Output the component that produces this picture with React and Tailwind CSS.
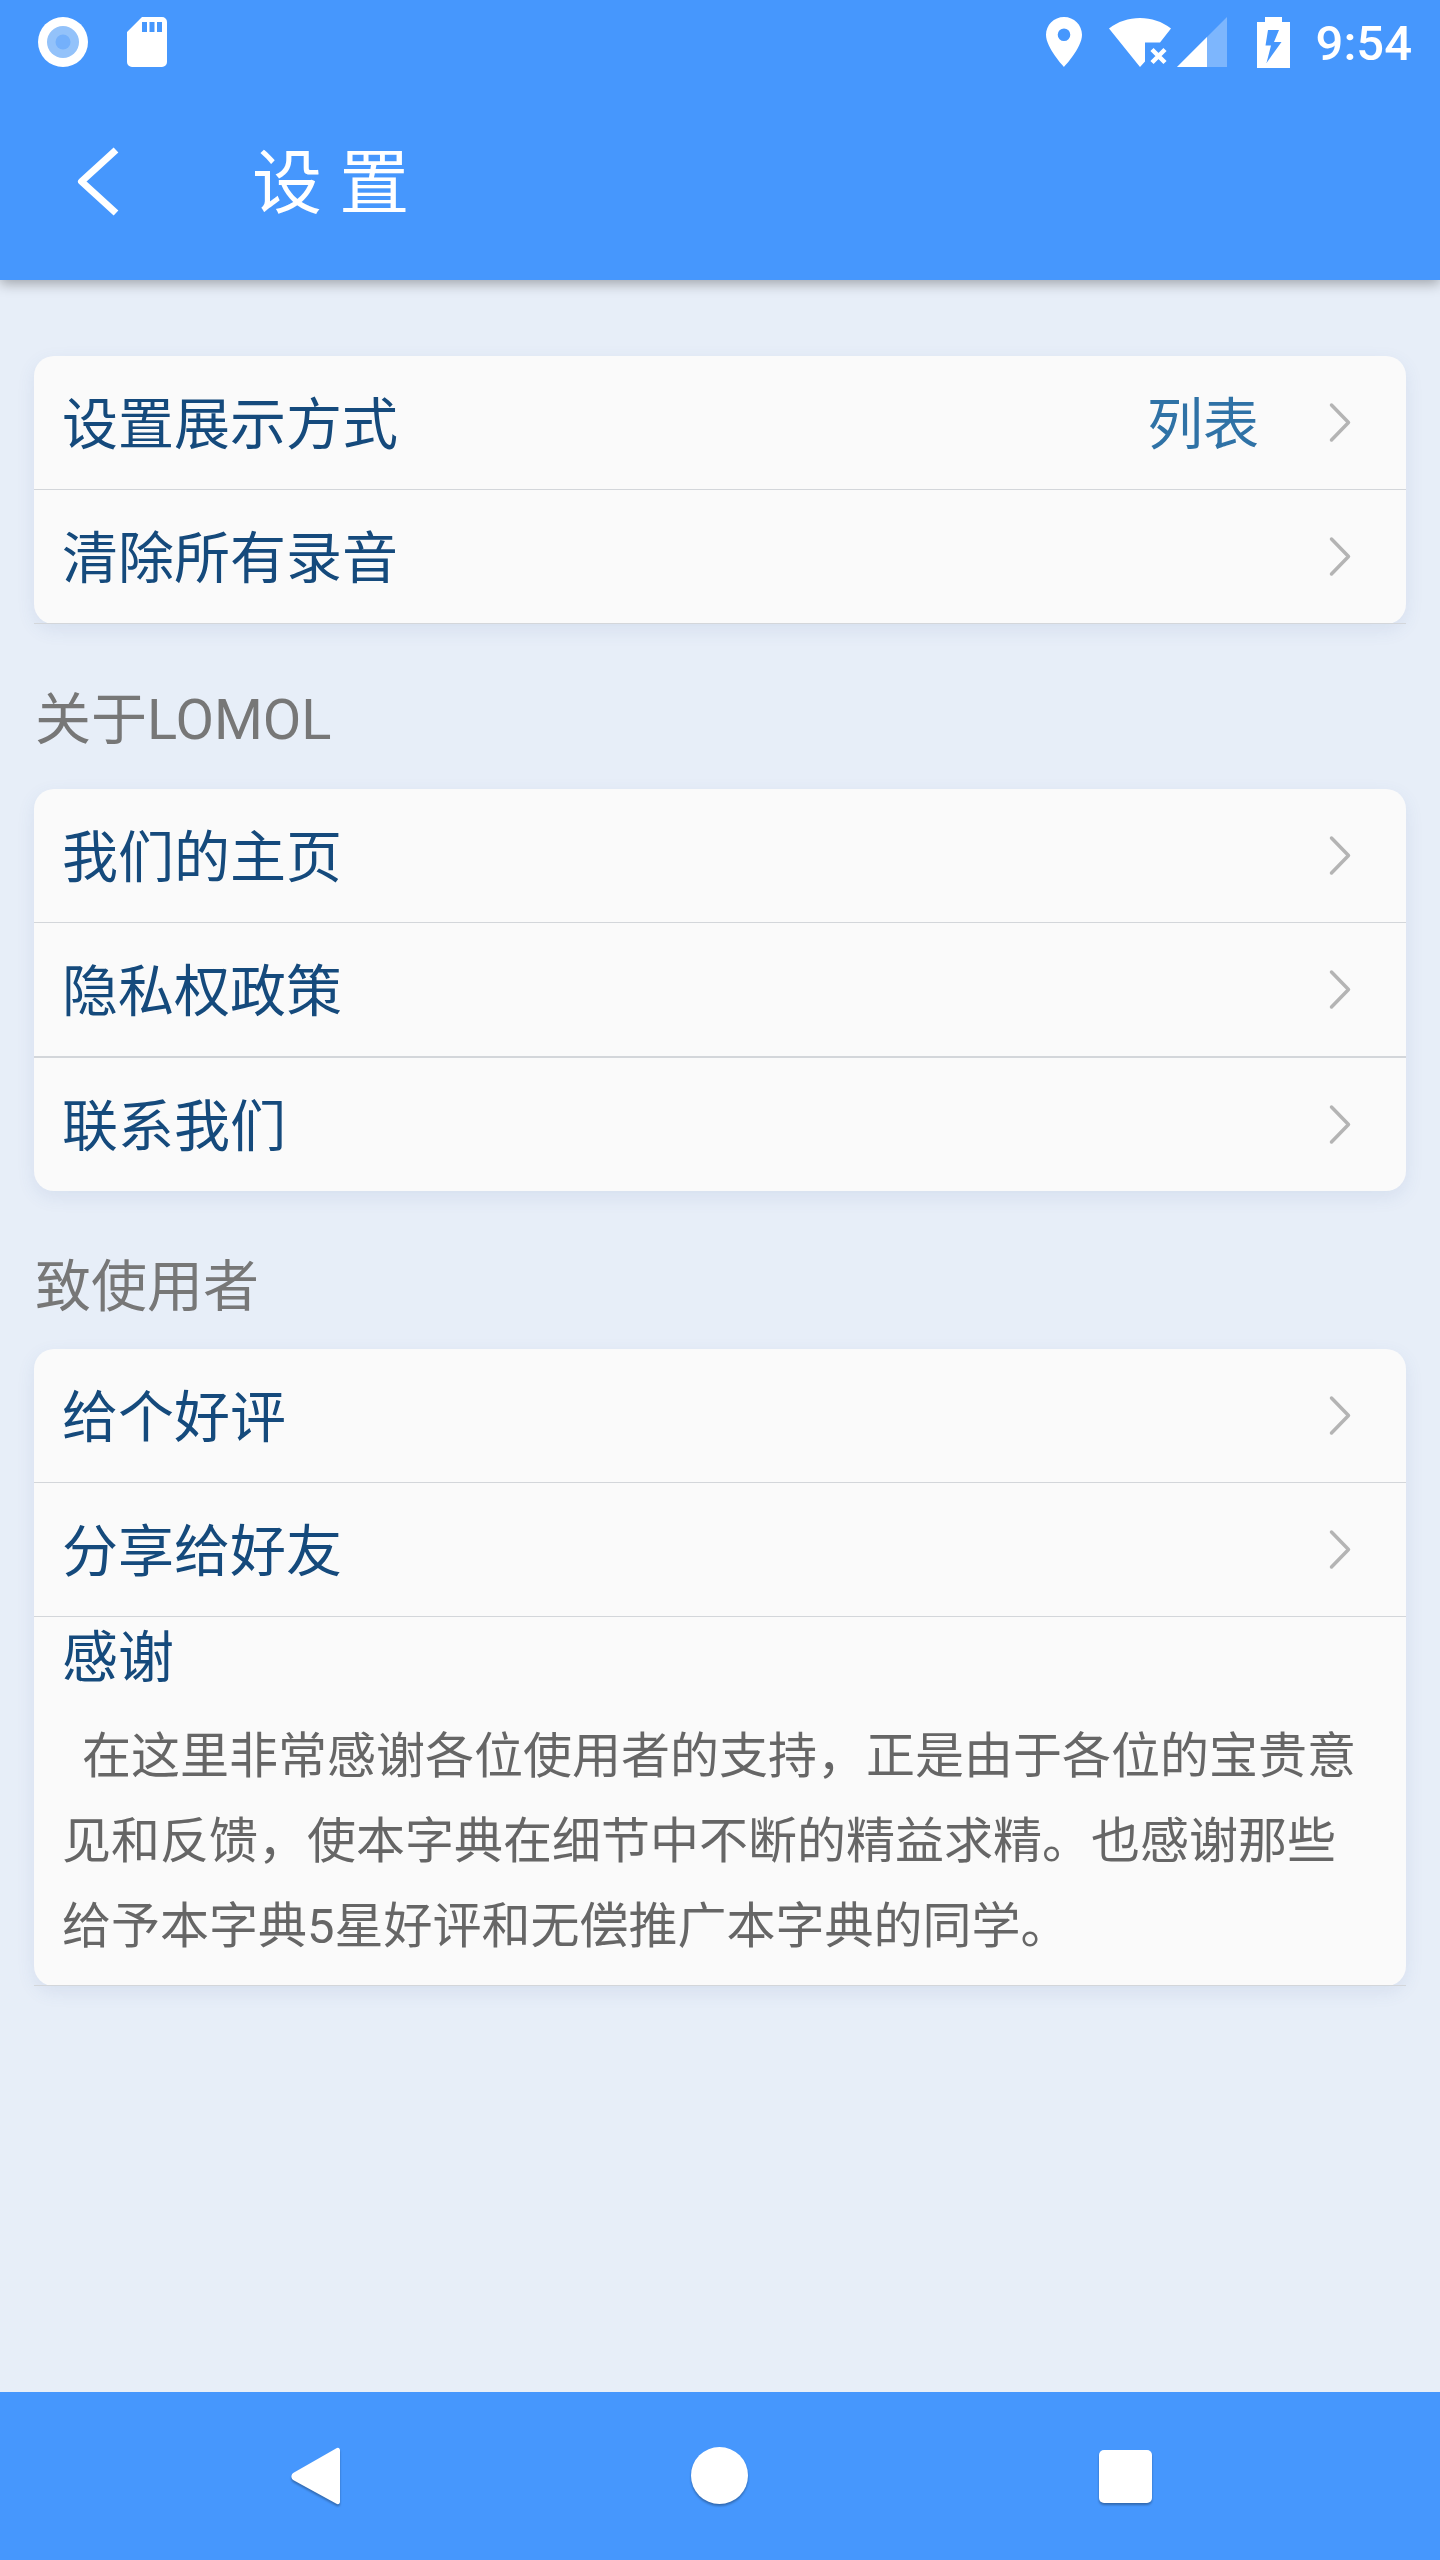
import clsx from 'clsx';

const displayRows = [
    { label: '设置展示方式', value: '列表', divider: 'thin' },
    { label: '清除所有录音', divider: 'thin' }
];

const aboutRows = [
    { label: '我们的主页', divider: 'thin' },
    { label: '隐私权政策', divider: 'thick' },
    { label: '联系我们' }
];

const userRows = [
    { label: '给个好评', divider: 'thin' },
    { label: '分享给好友', divider: 'thin' }
];

export default function App() {
    return (
        <div className="min-h-screen flex flex-col bg-[#e7eef8] font-['Roboto','Noto_Sans_CJK_SC',sans-serif]">
            <header className="bg-[#4697fd] shadow-[0_4px_12px_rgba(0,0,0,0.3)]">
                <StatusBar />
                <div className="flex items-center h-[196px] pl-[72px] text-white">
                    <button type="button" aria-label="返回" className="w-[52px] h-[72px]">
                        <svg viewBox="0 0 52 72" className="w-full h-full" fill="none" stroke="currentColor" strokeWidth="7">
                            <path d="M44 4 9.500 35.500 44 67" strokeLinejoin="round" />
                        </svg>
                    </button>
                    <h1 className="ml-32 pt-1 text-[70px] leading-[84px]">设 置</h1>
                </div>
            </header>

            <main className="flex-1 px-[34px] pt-[76px]">
                <Card>
                    <RowList rows={displayRows} />
                </Card>

                <SectionTitle className="mb-[29px]">关于LOMOL</SectionTitle>
                <Card>
                    <RowList rows={aboutRows} />
                </Card>

                <SectionTitle className="mb-[22px]">致使用者</SectionTitle>
                <Card>
                    <RowList rows={userRows} />
                    <div className="px-7 pb-4 border-b border-[#d3d6da]">
                        <h3 className="pt-px text-[56px] leading-[80px] text-[#154a7c]">感谢</h3>
                        <p className="mt-4 indent-5 text-[49px] leading-[85px] text-[#666666]">
                            在这里非常感谢各位使用者的支持，正是由于各位的宝贵意见和反馈，使本字典在细节中不断的精益求精。也感谢那些给予本字典5星好评和无偿推广本字典的同学。
                        </p>
                    </div>
                </Card>
            </main>

            <NavigationBar />
        </div>
    );
}

function Card({ children }) {
    return (
        <section className="bg-[#fafafa] rounded-[20px] shadow-[0_6px_18px_rgba(70,100,160,0.1)]">
            {children}
        </section>
    );
}

function SectionTitle({ children, className }) {
    return (
        <h2 className={clsx('mt-14 pl-px text-[56px] leading-[80px] text-[#777777]', className)}>{children}</h2>
    );
}

function RowList({ rows }) {
    return (
        <ul>
            {rows.map((row) => (
                <li
                    key={row.label}
                    className={clsx(
                        'border-[#d3d6da]',
                        row.divider === 'thin' && 'border-b',
                        row.divider === 'thick' && 'border-b-2'
                    )}
                >
                    <button type="button" className="w-full h-[133px] pl-7 pr-[52px] flex items-center text-left text-[56px] leading-[80px]">
                        <span className="flex-1 pt-1 text-[#154a7c]">{row.label}</span>
                        {row.value && <span className="mr-[67px] pt-1 text-[#2f72a6]">{row.value}</span>}
                        <svg viewBox="0 0 28 44" className="w-7 h-11" fill="none" stroke="#b4b4b4" strokeWidth="3.500" strokeLinecap="round" strokeLinejoin="round" aria-hidden="true">
                            <path d="M5.500 4 22.500 21.500 5.500 39" />
                        </svg>
                    </button>
                </li>
            ))}
        </ul>
    );
}

function StatusBar() {
    return (
        <div className="flex items-center justify-between h-[84px] pl-[38px] pr-7 text-white">
            <div className="flex items-center gap-[39px]">
                <svg viewBox="0 0 50 50" className="w-[50px] h-[50px]">
                    <circle cx="25" cy="25" r="25" fill="#fff" />
                    <circle cx="25" cy="25" r="16" fill="#93c2fa" />
                    <circle cx="25" cy="25" r="7.500" fill="#74b0fb" />
                </svg>
                <svg viewBox="0 0 40 50" className="w-10 h-[50px]" fill="currentColor">
                    <path fillRule="evenodd" d="M15 0h20a5 5 0 0 1 5 5v40a5 5 0 0 1-5 5H5a5 5 0 0 1-5-5V15ZM15 5v10h5V5ZM22.500 5v10h5V5ZM30 5v10h5V5Z" />
                </svg>
            </div>
            <div className="flex items-center">
                <svg viewBox="0 0 36 50" className="w-9 h-[50px]" fill="currentColor">
                    <path fillRule="evenodd" d="M18 0C8 0 0 8 0 17.800 0 31 18 50 18 50s18-19 18-32.200C36 8 28 0 18 0Zm0 11.500a6.300 6.300 0 1 1 0 12.600 6.300 6.300 0 0 1 0-12.600Z" />
                </svg>
                <svg viewBox="0 0 62 50" className="ml-[27px] w-[62px] h-[50px]">
                    <path fill="currentColor" d="M0 11.500C9 4.500 19.500 1 31 1s22 3.500 31 10.500L51 25.500H36V44.500L31 50Z" />
                    <path stroke="currentColor" strokeWidth="4.500" d="m43 32.500 13 13m0-13-13 13" />
                </svg>
                <svg viewBox="0 0 50 50" className="ml-[6px] w-[50px] h-[50px]" fill="currentColor">
                    <path fillOpacity=".3" d="M0 50h50V0Z" />
                    <path d="M0 50h30V20Z" />
                </svg>
                <svg viewBox="0 0 33 51" className="ml-[30px] w-[33px] h-[51px]" fill="currentColor">
                    <path fillRule="evenodd" d="M8 0h17v5h8v46H0V5h8ZM11 13 8.500 28.500H14L9.500 46 24.500 25H17L22 13Z" />
                </svg>
                <time className="ml-[26px] pt-1 text-[49px] leading-[60px] font-medium">9:54</time>
            </div>
        </div>
    );
}

function NavigationBar() {
    return (
        <nav className="grid grid-cols-3 h-[168px] px-28 bg-[#4697fd]">
            <NavButton label="返回">
                <path d="M57 6.500v51c0 2.500-2 3.500-4 2L11 36.500c-3.500-2-3.500-6 0-8L53 4.500c2-1.500 4-.5 4 2Z" />
            </NavButton>
            <NavButton label="主屏幕">
                <circle cx="31.500" cy="31.500" r="28.500" />
            </NavButton>
            <NavButton label="最近任务">
                <rect x="6" y="6" width="53" height="53" rx="5" />
            </NavButton>
        </nav>
    );
}

function NavButton({ label, children }) {
    return (
        <button type="button" aria-label={label} className="flex items-center justify-center">
            <svg viewBox="0 0 64 64" className="w-16 h-16 drop-shadow-[0_2px_1px_rgba(0,0,0,0.3)]" fill="#fff">
                {children}
            </svg>
        </button>
    );
}
